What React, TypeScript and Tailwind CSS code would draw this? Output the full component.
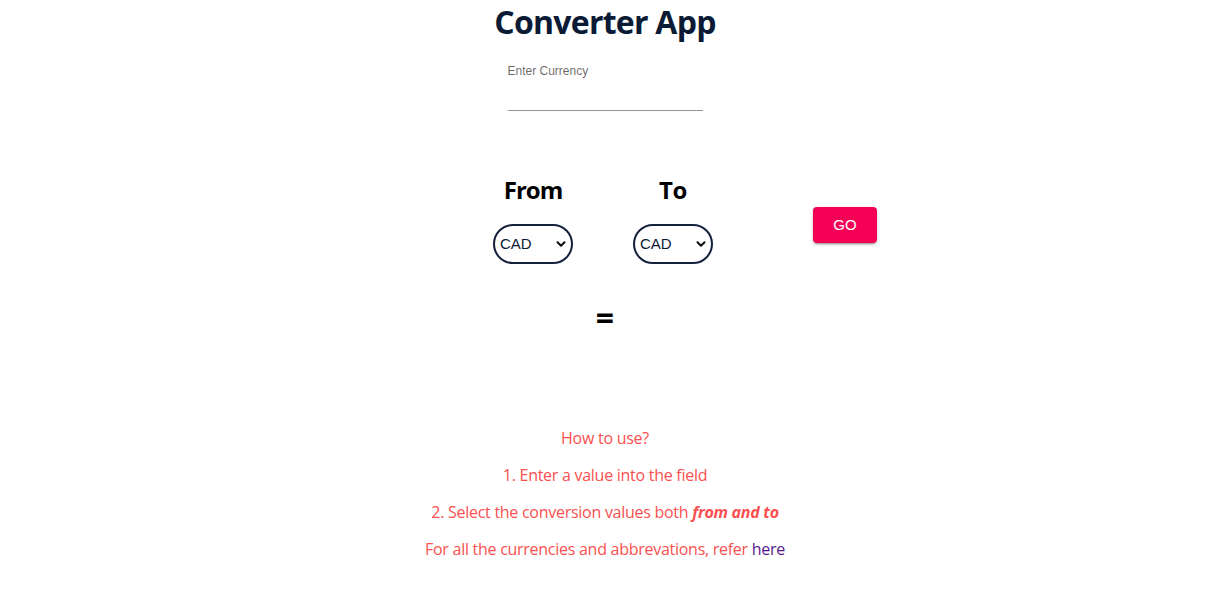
import { useState } from "react";
import { ChevronDown } from "lucide-react";

const currencies = ["CAD", "USD", "EUR", "GBP", "INR", "JPY"];

function CurrencySelect({ value, onChange }: { value: string; onChange: (v: string) => void }) {
  return (
    <div className="relative">
      <select
        value={value}
        onChange={(e) => onChange(e.target.value)}
        className="h-[40px] w-[80px] appearance-none rounded-full border-2 border-[#14213d] bg-white pl-[5px] pr-[16px] font-['Liberation_Sans',Arial,sans-serif] text-[15px] text-[#0b1a35]"
      >
        {currencies.map((c) => (
          <option key={c} value={c}>
            {c}
          </option>
        ))}
      </select>
      <ChevronDown
        className="pointer-events-none absolute right-[5px] top-[13px] h-[14px] w-[14px] text-[#111]"
        strokeWidth={3.5}
      />
    </div>
  );
}

export default function App() {
  const [amount, setAmount] = useState("");
  const [from, setFrom] = useState("CAD");
  const [to, setTo] = useState("CAD");

  return (
    <div className="flex min-h-[594px] flex-col items-center bg-white pr-[13px] font-['Open_Sans','Segoe_UI',sans-serif]">
      <h1 className="text-[32px] font-bold leading-[44px] tracking-[-0.75px] text-[#0b1a35]">Converter App</h1>

      {/* text field */}
      <div className="mt-[20px] flex w-[195px] flex-col">
        <label className="font-['Liberation_Sans',Arial,sans-serif] text-[12px] leading-[14px] text-[rgba(0,0,0,0.6)]">
          Enter Currency
        </label>
        <input
          value={amount}
          onChange={(e) => setAmount(e.target.value)}
          className="h-[33px] border-b border-[rgba(0,0,0,0.42)] bg-transparent font-['Liberation_Sans',Arial,sans-serif] text-[16px] outline-none"
        />
      </div>

      {/* from / to / go */}
      <div className="ml-[160px] mt-[63px] flex w-[384px] items-start">
        <div className="flex w-[80px] flex-col items-center">
          <h2 className="text-[24px] font-bold leading-[32px] tracking-[-1px] text-black">From</h2>
          <div className="mt-[18px]">
            <CurrencySelect value={from} onChange={setFrom} />
          </div>
        </div>
        <div className="ml-[60px] flex w-[80px] flex-col items-center">
          <h2 className="text-[24px] font-bold leading-[32px] tracking-[-0.5px] text-black">To</h2>
          <div className="mt-[18px]">
            <CurrencySelect value={to} onChange={setTo} />
          </div>
        </div>
        <button
          type="button"
          className="ml-[100px] mt-[33px] h-[36px] w-[64px] rounded-[4px] bg-[#f50057] font-['Liberation_Sans',Arial,sans-serif] text-[15px] uppercase text-white shadow-[0_3px_1px_-2px_rgba(0,0,0,0.2),0_2px_2px_0_rgba(0,0,0,0.14),0_1px_5px_0_rgba(0,0,0,0.12)]"
        >
          Go
        </button>
      </div>

      <div className="mt-[34px] text-[32px] font-bold leading-[40px] text-black">=</div>

      {/* instructions */}
      <div className="mt-[89px] flex flex-col items-center text-[16px] font-medium leading-[22px] tracking-[-0.27px] text-[#fa5050]">
        <p>How to use?</p>
        <p className="mt-[15px]">1. Enter a value into the field</p>
        <p className="mt-[15px]">
          2. Select the conversion values both <b className="italic">from and to</b>
        </p>
        <p className="mt-[15px]">
          For all the currencies and abbrevations, refer{" "}
          <a href="#" className="text-[#551a8b]">
            here
          </a>
        </p>
      </div>
    </div>
  );
}
